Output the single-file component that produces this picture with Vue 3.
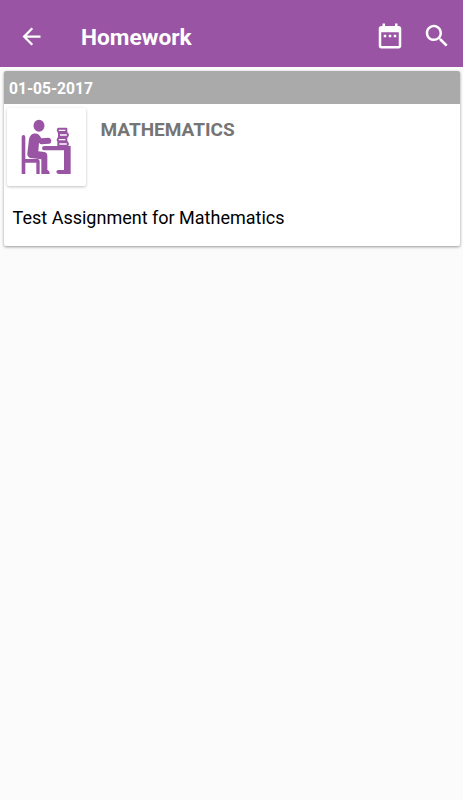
<script setup>
import { ref } from "vue";

const homeworks = ref([
  {
    id: 1,
    date: "01-05-2017",
    subject: "MATHEMATICS",
    description: "Test Assignment for Mathematics",
  },
]);
</script>

<template>
  <div class="screen">
    <header class="toolbar">
      <button class="icon-button" aria-label="Back">
        <svg class="back-icon" viewBox="0 0 24 24">
          <path d="M20 11H7.83l5.59-5.59L12 4l-8 8 8 8 1.41-1.41L7.83 13H20v-2z" />
        </svg>
      </button>
      <h1>Homework</h1>
      <button class="icon-button" aria-label="Calendar">
        <svg class="calendar-icon" viewBox="0 0 24 24">
          <path d="M9 11H7v2h2v-2zm4 0h-2v2h2v-2zm4 0h-2v2h2v-2zm2-7h-1V2h-2v2H8V2H6v2H5c-1.110 0-1.990.9-1.990 2L3 20c0 1.100.890 2 2 2h14c1.100 0 2-.9 2-2V6c0-1.100-.9-2-2-2zm0 16H5V9h14v11z" />
        </svg>
      </button>
      <button class="icon-button" aria-label="Search">
        <svg class="search-icon" viewBox="0 0 24 24">
          <path d="M15.500 14h-.790l-.280-.270C15.410 12.590 16 11.110 16 9.500 16 5.910 13.090 3 9.500 3S3 5.910 3 9.500 5.910 16 9.500 16c1.610 0 3.090-.590 4.230-1.570l.270.280v.790l5 4.990L20.490 19l-4.990-5zm-6 0C7.010 14 5 11.990 5 9.500S7.010 5 9.500 5 14 7.010 14 9.500 11.990 14 9.500 14z" />
        </svg>
      </button>
    </header>

    <main class="list">
      <article v-for="item in homeworks" :key="item.id" class="card">
        <div class="date">{{ item.date }}</div>
        <div class="subject-row">
          <div class="thumb">
            <!-- student sitting at a desk -->
            <svg viewBox="0 0 237 234">
              <g fill="#9955a4">
                <ellipse cx="96" cy="53" rx="16.500" ry="18" />
                <path d="M78 77C91 74 98 80 103 91L124 89C135 89 136 106 126 107L104 109Q99 109 96 104L94 130L112 132Q121 134 121 144V186Q128 188 128 198H103V154L70 150Q60 147 61 136L66 94Q69 80 78 77Z" />
                <path d="M44 87Q44 81 49.500 81Q55 81 55 87V153H93Q98 154 98 160V198H88V164H55V198H44Z" />
                <path d="M111 114H191V198H155Q148 197 148 191Q148 186 154 186H171V127H111Q105 126 105 120.500Q105 115 111 114Z" />
              </g>
              <g fill="#fff" stroke="#9955a4" stroke-width="6" stroke-linejoin="round">
                <path d="M178 62H154Q150 67 154 72H178Z" />
                <path d="M156 76H181Q185 81 181 86H156Z" />
                <path d="M178 90H154Q150 95 154 100H178Z" />
                <path d="M154 103H181Q185 108 181 113H154Z" />
              </g>
            </svg>
          </div>
          <h2>{{ item.subject }}</h2>
        </div>
        <p class="description">{{ item.description }}</p>
      </article>
    </main>
  </div>
</template>

<style>
body {
  background: #fbfbfb;
}
</style>

<style scoped>
.screen {
  min-height: 800px;
  background: #fbfbfb;
  font-family: Roboto, sans-serif;
}

.toolbar {
  display: flex;
  align-items: center;
  box-sizing: border-box;
  height: 67px;
  padding: 5px 11px 0 18px;
  background: #9955a4;
}

.toolbar h1 {
  flex: 1;
  margin: 3px 0 0 36px;
  color: #fff;
  font-size: 22.7px;
  font-weight: 700;
  line-height: 28px;
}

.icon-button {
  display: flex;
  padding: 0;
  border: none;
  background: none;
  cursor: pointer;
}

.icon-button svg {
  fill: #fff;
}

.back-icon {
  width: 27px;
  height: 27px;
}

.calendar-icon {
  width: 30px;
  height: 30px;
}

.search-icon {
  width: 30px;
  height: 30px;
  margin-left: 17px;
}

.list {
  padding: 4px 3px 4px 4px;
}

.card {
  height: 175px;
  overflow: hidden;
  background: #fff;
  border-radius: 2px;
  box-shadow: 0 1px 3px rgba(0, 0, 0, 0.4);
}

.date {
  height: 33px;
  padding-left: 5px;
  background: #aaa;
  color: #fff;
  font-size: 15.6px;
  font-weight: 700;
  line-height: 36px;
}

.subject-row {
  display: flex;
  padding: 4px 3px 0;
}

.thumb {
  width: 79px;
  height: 78px;
  background: #fff;
  border-radius: 2px;
  box-shadow: 0 1px 3px rgba(0, 0, 0, 0.25);
}

.thumb svg {
  display: block;
  width: 100%;
  height: 100%;
}

.subject-row h2 {
  margin: 10px 0 0 14.5px;
  color: #757575;
  font-size: 19px;
  font-weight: 700;
  line-height: 23px;
}

.description {
  margin: 20px 0 0 8.6px;
  color: #000;
  font-size: 18px;
  line-height: 24px;
}
</style>
